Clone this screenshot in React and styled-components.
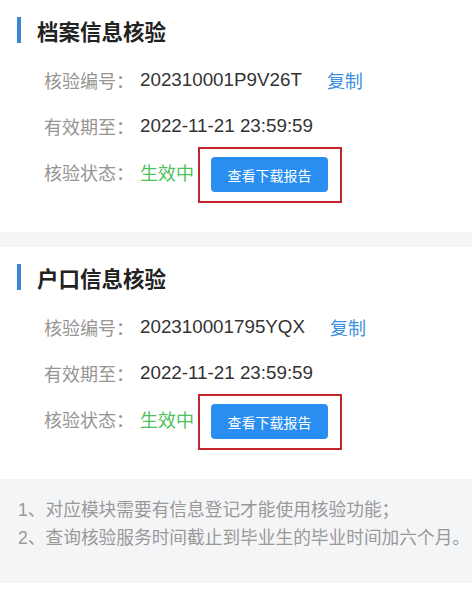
import React from 'react';
import styled, { createGlobalStyle } from 'styled-components';

const GlobalStyle = createGlobalStyle`
    body {
        margin: 0;
        background: #ffffff;
        font-family: "Liberation Sans", "Noto Sans CJK SC", sans-serif;
    }
`

const Page = styled.div`
    width: 472px;
    background: #f4f5f7;
    display: flex;
    flex-direction: column;
    gap: 15px;
    padding-bottom: 7px;
    background-clip: content-box;
`

const Card = styled.section`
    background: #ffffff;
    padding: 16px 0 37px 17px;
`

const Title = styled.h3`
    margin: 0 0 13px 0;
    height: 28px;
    display: flex;
    align-items: center;
    gap: 16px;
    font-size: 21.5px;
    font-weight: bold;
    color: #222222;
    &::before {
        content: "";
        width: 4px;
        height: 26px;
        background: #3a87d6;
    }
`

const Row = styled.div`
    height: 46px;
    display: flex;
    align-items: center;
    padding-left: 27px;
    font-size: 18px;
`

const Label = styled.span`
    color: #959595;
    width: 96px;
`

const Value = styled.span`
    color: ${props => props.green ? '#4fbf5e' : '#333333'};
    font-size: ${props => props.green ? '18px' : '18.8px'};
`

const CopyLink = styled.span`
    color: #3d8fe0;
    margin-left: 25px;
`

const Highlight = styled.div`
    margin-left: 4px;
    margin-top: 6px;
    padding: 8px 12px 9px 11px;
    border: 2px solid #c3272b;
`

const ReportButton = styled.button`
    width: 117px;
    height: 35px;
    border: none;
    border-radius: 4px;
    background: #2a8ef0;
    color: #ffffff;
    font-size: 14px;
    font-family: "Liberation Sans", "Noto Sans CJK SC", sans-serif;
`

const Notes = styled.div`
    padding: 2px 0 31px 18px;
    font-size: 17.7px;
    line-height: 28px;
    color: #999999;
    white-space: nowrap;
`

const CheckCard = (props) => {
    return (
        <Card>
            <Title>{props.title}</Title>
            <Row>
                <Label>核验编号：</Label>
                <Value>{props.code}</Value>
                <CopyLink>复制</CopyLink>
            </Row>
            <Row>
                <Label>有效期至：</Label>
                <Value>2022-11-21 23:59:59</Value>
            </Row>
            <Row>
                <Label>核验状态：</Label>
                <Value green>生效中</Value>
                <Highlight>
                    <ReportButton>查看下载报告</ReportButton>
                </Highlight>
            </Row>
        </Card>
    )
}

const App = () => {
    return (
        <>
            <GlobalStyle />
            <Page>
                <CheckCard title="档案信息核验" code="202310001P9V26T" />
                <CheckCard title="户口信息核验" code="202310001795YQX" />
                <Notes>
                    <div>1、对应模块需要有信息登记才能使用核验功能；</div>
                    <div>2、查询核验服务时间截止到毕业生的毕业时间加六个月。</div>
                </Notes>
            </Page>
        </>
    )
}

export default App;
